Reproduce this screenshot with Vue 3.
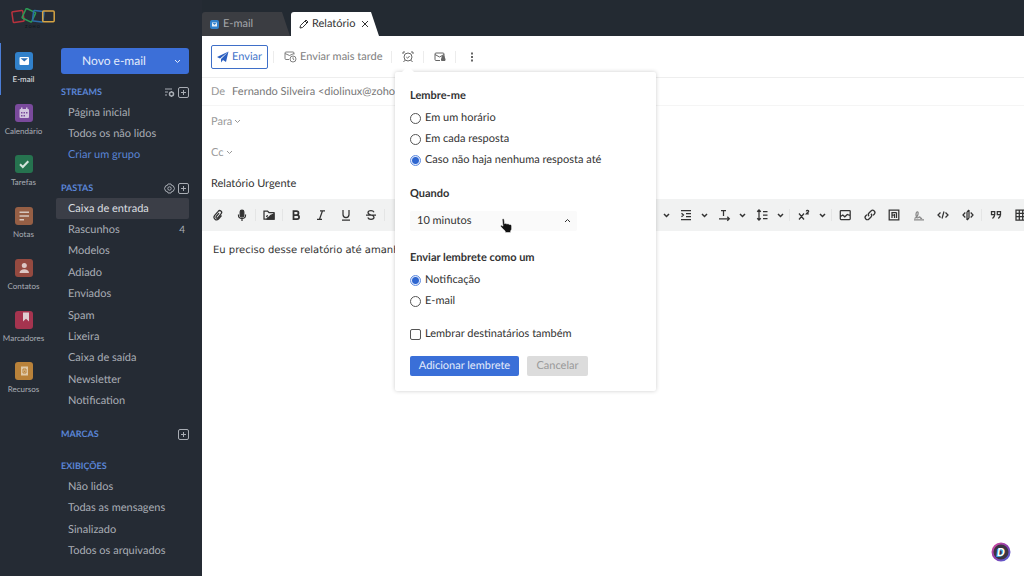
<script setup>
import { ref } from 'vue'

const apps = [
  { name: 'E-mail', color: '#3181cb', active: true, kind: 'mail' },
  { name: 'Calendário', color: '#7a4a9c', kind: 'calendar' },
  { name: 'Tarefas', color: '#26734f', kind: 'check' },
  { name: 'Notas', color: '#965f45', kind: 'note' },
  { name: 'Contatos', color: '#954a40', kind: 'person' },
  { name: 'Marcadores', color: '#a5344f', kind: 'bookmark' },
  { name: 'Recursos', color: '#b9823a', kind: 'resource' }
]

const sections = [
  { title: 'STREAMS', size: 'three', tool: 'sort', add: true, items: ['Página inicial', 'Todos os não lidos', 'Criar um grupo'] },
  {
    title: 'PASTAS', size: 'ten', tool: 'gear', add: true,
    items: ['Caixa de entrada', 'Rascunhos', 'Modelos', 'Adiado', 'Enviados', 'Spam', 'Lixeira', 'Caixa de saída', 'Newsletter', 'Notification']
  },
  { title: 'MARCAS', size: 'none', add: true, items: [] },
  { title: 'EXIBIÇÕES', size: 'four', items: ['Não lidos', 'Todas as mensagens', 'Sinalizado', 'Todos os arquivados'] }
]

const leftTools = [
  { name: 'Anexar', d: ['M10.500 6.500 7.500 10a2.600 2.600 0 0 1-4-3.300L7.200 2.300a1.900 1.900 0 0 1 3 2.400L6.800 8.800a1 1 0 0 1-1.600-1.300L8 4.200'] },
  { name: 'Ditar', d: ['M2.500 5.500v.8a3.500 3.200 0 0 0 7 0v-.8M6 9.500V12'], f: 'M6 1a1.800 1.800 0 0 1 1.800 1.800v3.400a1.800 1.800 0 0 1-3.600 0V2.800A1.800 1.800 0 0 1 6 1z' },
  { sep: true },
  { name: 'Nuvem', d: ['M1 2h3.500L6 3.500h5V10H1zM3.500 8a1.500 1.500 0 0 1 1.500-1.500'], f: 'M4 10c0-2 3-1.500 3.500-3.500L11 5v5z' },
  { sep: true },
  { name: 'Negrito', d: ['M3.500 2h3a2 2 0 0 1 0 4h-3zM3.500 6h3.500a2.100 2.100 0 0 1 0 4.200H3.500z'], bold: true },
  { name: 'Itálico', d: ['M5 1.800h5M2 10.300h5M7.500 1.800l-3 8.500'] },
  { name: 'Sublinhado', d: ['M3 1v4.500a3 3 0 0 0 6 0V1M2 11h8'] },
  { name: 'Tachado', d: ['M9 3.300C8.500 2.200 7.400 1.700 6 1.700c-1.700 0-3 .8-3 2.100C3 6.500 9 5.500 9 8.200c0 1.300-1.300 2.100-3 2.100s-2.800-.7-3.200-1.800M1 6h10'] },
  { sep: true }
]

const spacingTools = [
  { chevron: true, name: 'Alinhamento' },
  { name: 'Recuo', d: ['M1 1.500h10M6 4.500h5M6 7.500h5M1 10.500h10M1.500 4.200 3.500 6l-2 1.800'] },
  { chevron: true, name: 'Opções de recuo' },
  { name: 'Direção do texto', d: ['M3 1.500h5M5.500 1.500v5.500M1 9.800h10M9.300 7.800l2 2-2 2'] },
  { chevron: true, name: 'Opções de direção' },
  { name: 'Espaçamento', d: ['M3 1v10M1.200 2.800 3 1l1.800 1.800M1.200 9.200 3 11l1.800-1.800M7 2.500h4.500M7 6h4.500M7 9.500h4.500'] },
  { chevron: true, name: 'Opções de espaçamento' },
  { sep: true },
  { name: 'Sobrescrito', d: ['M1 4.500l5 6M6 4.500l-5 6M8.300 2.300c.3-1.400 2.600-1.200 2.300.2-.2.900-1.500 1.300-2.300 2.300h2.500'] },
  { chevron: true, name: 'Opções de sobrescrito' },
  { sep: true }
]

const insertTools = [
  { name: 'Imagem', d: ['M2 1.500h8.500a.7.700 0 0 1 .7.700v7.600a.7.700 0 0 1-.7.700H2a.7.700 0 0 1-.7-.7V2.200A.7.700 0 0 1 2 1.500zM1.500 7.500 3.800 6l2 1.800L8.300 5.500l2.700 1'] },
  { name: 'Link', d: ['M5 7.200a2.300 2.300 0 0 1 0-3.200l2-2a2.200 2.200 0 0 1 3.200 3.200L9 6.400M7 4.800a2.300 2.300 0 0 1 0 3.200l-2 2a2.200 2.200 0 0 1-3.200-3.200L3 5.600'] },
  { name: 'Campo', d: ['M1.200 1.200h9.600v9.600H1.200zM4 9V3.500h4.500M3.800 6h2M6.500 5v4M8.500 3.500V9'] },
  { name: 'Assinatura', faint: true, d: ['M1.500 9.500c2.500-1 4-4 3.600-6C4.700 2 3 3 3 5.500 3 8 4 9.500 5.500 8.500c1-.7 1.300-1 1.700 0 .3.900 1 1 1.800.4M1 10.800h10'] },
  { name: 'HTML', d: ['M3.500 3.500 1 6l2.500 2.500M8.500 3.500 11 6 8.500 8.500M7 2.500l-2 7'] },
  { name: 'Código', d: ['M3.300 3.500 1 6l2.300 2.500M8.700 3.500 11 6 8.700 8.500M7 1v8M5 3v8M5 3l2-2M5 11l2-2'] }
]

const endTools = [
  { sep: true },
  { name: 'Citação', d: ['M1.500 2.500h3.200v3.200H1.500zM4.700 5.200c0 2-.9 3.400-2.200 4.300M7.300 2.500h3.200v3.200H7.300zM10.500 5.200c0 2-.9 3.400-2.200 4.300'] },
  { name: 'Tabela', d: ['M1 1h10v10H1zM1 4.300h10M1 7.700h10M4.300 1v10M7.700 1v10'] }
]

const reminder = ref('noreply')
const sendAs = ref('notification')
const notifyAll = ref(false)
const delay = ref('10')
const subject = ref('Relatório Urgente')
</script>

<template>
  <div class="shell">
    <aside class="side">
      <div class="logo">
        <svg width="46" height="20" viewBox="0 0 46 20" role="img" aria-label="Zoho">
          <g fill="none" stroke-width="1.500">
            <rect x="1.500" y="3" width="11" height="11" rx="1" stroke="#b8323d" transform="rotate(-8 7 8.500)" />
            <rect x="12.500" y="2" width="10.500" height="10.500" rx="1" stroke="#2c9a55" transform="rotate(25 17.700 7.500)" />
            <rect x="22" y="3" width="10.500" height="10.500" rx="1" stroke="#2c6ca8" transform="rotate(7 27 8.500)" />
            <rect x="31.700" y="3" width="11.500" height="10.700" rx="1" stroke="#d6a444" />
          </g>
          <text x="14" y="19.500" class="wordmark">Z O H O</text>
        </svg>
      </div>
      <nav class="rail" aria-label="Aplicativos">
        <a v-for="a in apps" :key="a.name" href="#" class="app" :class="{ active: a.active }">
          <svg width="18" height="18" viewBox="0 0 18 18" aria-hidden="true">
            <rect width="18" height="18" rx="3" :fill="a.color" />
            <template v-if="a.kind === 'mail'">
              <rect x="4.500" y="5" width="9.500" height="8" rx="1" fill="#fff" />
              <path d="M5.500 6.300h7.500L9.300 9.400z" fill="#2d6fb4" />
            </template>
            <g v-else-if="a.kind === 'calendar'" fill="#d3c5de">
              <rect x="4.500" y="5" width="9.500" height="9" rx="1" />
              <path d="M6 3.500h1.500V6H6zM11 3.500h1.500V6H11z" />
              <path d="M6 8h1.500v1.500H6zM8.500 8H10v1.500H8.500zM11 8h1.500v1.500H11zM6 11h1.500v1.500H6zM8.500 11H10v1.500H8.500z" fill="#7a4a9c" />
            </g>
            <path v-else-if="a.kind === 'check'" d="M5 9.300 7.800 12 13.300 6.300" fill="none" stroke="#d4e4dc" stroke-width="2" />
            <path v-else-if="a.kind === 'note'" d="M4.500 5.300h9.500M4.500 9h9.500M4.500 12.700H9" stroke="#d6c6bd" stroke-width="1.500" />
            <g v-else-if="a.kind === 'person'" fill="#ddc8c5">
              <circle cx="9.300" cy="6.500" r="2.500" />
              <path d="M4.500 14c0-5 9.500-5 9.500 0z" />
            </g>
            <path v-else-if="a.kind === 'bookmark'" d="M8 1.500h6v9l-3-2.700-3 2.700z" fill="#decdd2" />
            <g v-else>
              <rect x="6" y="4.500" width="7" height="9" fill="#dfc9a8" />
              <path d="M8 7h3v4H8z" fill="none" stroke="#b9823a" />
              <path d="M9 8.500h1V10H9z" fill="#b9823a" />
            </g>
          </svg>
          <span>{{ a.name }}</span>
        </a>
      </nav>
      <div class="folders">
        <div class="new">
          <button type="button" class="new-main">Novo e-mail</button>
          <button type="button" class="new-more" aria-label="Mais opções">
            <svg width="7" height="5" viewBox="0 0 7 5"><path d="M1 1l2.500 2.500L6 1" /></svg>
          </button>
        </div>
        <section v-for="s in sections" :key="s.title">
          <header>
            <h2>{{ s.title }}</h2>
            <button v-if="s.tool" type="button" :aria-label="'Ajustar ' + s.title">
              <svg v-if="s.tool === 'sort'" width="11" height="11" viewBox="0 0 11 11"><path d="M1 2h7M1 5h3M1 8h2" /><circle cx="7.500" cy="7" r="2" stroke-width="1.500" /><path d="M7.500 4v1M7.500 9v1" /></svg>
              <svg v-else width="11" height="11" viewBox="0 0 11 11"><path d="M3.500 1.500 4 1h3l.7 1.500 1.600.3L10.500 5.500 9.300 8.200l-1.600.3L7 10H4l-.7-1.500-1.600-.3L.5 5.500l1.200-2.700 1.600-.3z" /><circle cx="5.500" cy="5.500" r="1.700" /></svg>
            </button>
            <button v-if="s.add" type="button" :aria-label="'Adicionar a ' + s.title">
              <svg width="11" height="11" viewBox="0 0 11 11"><rect x=".5" y=".5" width="10" height="10" rx="1.500" /><path d="M3 5.500h5M5.500 3v5" /></svg>
            </button>
          </header>
          <ul v-if="s.items.length" :class="s.size">
            <li v-for="i in s.items" :key="i">
              <a href="#" :class="{ selected: i === 'Caixa de entrada', create: i === 'Criar um grupo' }">
                <span>{{ i }}</span><span v-if="i === 'Rascunhos'" class="count">4</span>
              </a>
            </li>
          </ul>
        </section>
      </div>
    </aside>

    <main>
      <div class="tabs">
        <button type="button" class="tab">
          <svg class="tab-mail" width="9" height="9" viewBox="0 0 9 9"><rect width="9" height="9" rx="2" fill="#3181cb" /><rect x="2" y="2.500" width="5" height="4" fill="#e6eef6" /><path d="M2.500 3h4L4.500 5z" fill="#3181cb" /></svg>
          E-mail
        </button>
        <div class="tab current">
          <svg class="pencil" width="10" height="10" viewBox="0 0 10 10"><path d="M1 9l.5-2.500L7 1l2 2-5.500 5.500zM6 2l2 2" /></svg>
          <span class="tab-title">Relatório Urgente</span>
          <button type="button" class="close" aria-label="Fechar">
            <svg width="8" height="8" viewBox="0 0 8 8"><path d="M1 1l6 6M7 1 1 7" /></svg>
          </button>
        </div>
      </div>

      <div class="actions">
        <button type="button" class="send">
          <svg width="12" height="12" viewBox="0 0 12 12"><path d="M11.500.5 0 6l3 1.500zM11.500.5 4 8v3.500L6 9l3 2z" /></svg>
          Enviar
        </button>
        <i class="rule"></i>
        <button type="button" class="later">
          <svg width="13" height="12" viewBox="0 0 13 12"><path d="M5 8.500H2a1 1 0 0 1-1-1V2a1 1 0 0 1 1-1h7a1 1 0 0 1 1 1v1.500M1 2.500l4.500 2L10 2.500" /><circle cx="9" cy="8" r="3" /><path d="M9 6.300V8l1.200.8" /></svg>
          Enviar mais tarde
        </button>
        <i class="rule"></i>
        <div class="reminder">
          <button type="button" class="tool" aria-label="Lembrete" aria-expanded="true">
            <svg width="12" height="12" viewBox="0 0 12 12"><circle cx="6" cy="6" r="4" /><path d="M4.300 6l1.300 1.200 2-2.200M1 3V1h2M9 1h2v2M3 9.200 1.500 11M9 9.200l1.500 1.800" /></svg>
          </button>
          <form class="popup" @submit.prevent>
            <fieldset>
              <legend>Lembre-me</legend>
              <label><input v-model="reminder" type="radio" name="when" value="time"> Em um horário</label>
              <label><input v-model="reminder" type="radio" name="when" value="reply"> Em cada resposta</label>
              <label><input v-model="reminder" type="radio" name="when" value="noreply"> Caso não haja nenhuma resposta até</label>
            </fieldset>
            <div class="delay">
              <label class="title" for="delay">Quando</label>
              <div class="pick">
                <select id="delay" v-model="delay"><option value="10">10 minutos</option></select>
                <svg class="up" width="7" height="5" viewBox="0 0 7 5"><path d="M1 4l2.500-2.500L6 4" /></svg>
                <svg class="hand" width="13" height="16" viewBox="0 0 13 16"><path d="M2.200 1.500c.2-1 1.700-1 1.900 0l.5 4.200 1.300-.4.900.7 1.400-.3.900.8 1.500 0 1 1.200v3.500l-1 1.800v1.500H5.200V13L3 11 .8 8.600c-.5-1 .5-1.700 1.300-1.200l.9.800z" /></svg>
              </div>
            </div>
            <fieldset class="as">
              <legend>Enviar lembrete como um</legend>
              <label><input v-model="sendAs" type="radio" name="as" value="notification"> Notificação</label>
              <label><input v-model="sendAs" type="radio" name="as" value="mail"> E-mail</label>
            </fieldset>
            <label class="everyone"><input v-model="notifyAll" type="checkbox"> Lembrar destinatários também</label>
            <div class="buttons">
              <button type="submit" class="primary">Adicionar lembrete</button>
              <button type="button" class="cancel">Cancelar</button>
            </div>
          </form>
        </div>
        <i class="rule"></i>
        <button type="button" class="tool" aria-label="Proteger e-mail">
          <svg width="12" height="10" viewBox="0 0 12 10"><path d="M6 8.500H2a1 1 0 0 1-1-1V2a1 1 0 0 1 1-1h7a1 1 0 0 1 1 1v2M1 2.500l4.500 2.500L10 2.500" /><path class="solid" d="M7.500 6.500h3.500v2H7.500zM8 6V5a1.200 1.200 0 0 1 2.400 0v1" /></svg>
        </button>
        <i class="rule"></i>
        <button type="button" class="tool" aria-label="Mais">
          <svg width="4" height="12" viewBox="0 0 4 12"><path class="dots" d="M1 1.500h2v2H1zM1 5h2v2H1zM1 8.500h2v2H1z" /></svg>
        </button>
      </div>

      <div class="row from"><span>De</span><strong>Fernando Silveira &lt;diolinux@zohom</strong></div>
      <div class="row">
        <button type="button">Para <svg width="7" height="5" viewBox="0 0 7 5"><path d="M1 1l2.500 2.500L6 1" /></svg></button>
      </div>
      <div class="row">
        <button type="button">Cc <svg width="7" height="5" viewBox="0 0 7 5"><path d="M1 1l2.500 2.500L6 1" /></svg></button>
      </div>
      <div class="row subject"><input v-model="subject" type="text" aria-label="Assunto"></div>

      <div class="format">
        <div v-for="(group, g) in [leftTools, spacingTools, insertTools, endTools]" :key="g" class="group" :class="{ first: g === 0, insert: g === 2 }">
          <template v-for="(t, n) in group" :key="n">
            <i v-if="t.sep" class="rule"></i>
            <button v-else-if="t.chevron" type="button" class="more" :aria-label="t.name">
              <svg width="7" height="5" viewBox="0 0 7 5"><path d="M1 1l2.500 2.500L6 1" /></svg>
            </button>
            <button v-else type="button" class="icon" :class="{ faint: t.faint, bold: t.bold }" :aria-label="t.name">
              <svg width="12" height="12" viewBox="0 0 12 12"><path v-for="p in t.d" :key="p" :d="p" /><path v-if="t.f" class="fill" :d="t.f" /></svg>
            </button>
          </template>
        </div>
      </div>

      <div class="body" contenteditable="true" role="textbox" aria-label="Mensagem">Eu preciso desse relatório até amanh</div>

      <svg class="badge" width="20" height="20" viewBox="0 0 20 20" role="img" aria-label="D">
        <defs>
          <linearGradient id="ring" x1="0" y1="0" x2="1" y2="1"><stop offset="0" stop-color="#d34a9d" /><stop offset=".5" stop-color="#8d3fae" /><stop offset="1" stop-color="#4b62d6" /></linearGradient>
        </defs>
        <circle cx="10" cy="10" r="8.500" fill="#3b3442" stroke="url(#ring)" stroke-width="2" />
        <text x="5" y="14.500" class="badge-shade">D</text>
        <text x="6" y="14" class="badge-letter">D</text>
      </svg>
    </main>
  </div>
</template>

<style>
body { margin: 0; background: #252b34; }
</style>

<style scoped>
.shell {
  display: grid;
  grid-template-columns: 202px minmax(0, 1fr);
  height: 100vh;
  overflow: hidden;
  font: 11px/16px Lato, "Liberation Sans", sans-serif;
  text-rendering: geometricPrecision;
  background: #252b34;
  color: #a9adb4;
}
button, input, select { font: inherit; color: inherit; margin: 0; text-rendering: inherit; }
button { padding: 0; border: 0; background: none; display: inline-flex; align-items: center; justify-content: center; white-space: nowrap; }
a { color: inherit; text-decoration: none; }
svg { display: block; flex: none; }
button svg, .up { fill: none; stroke: currentColor; stroke-width: 1; }
h2 { margin: 0; }

.side { display: grid; grid-template-columns: 48px minmax(0, 1fr); grid-template-rows: 43px 1fr; }
.logo { grid-column: 1 / -1; padding: 8px 0 0 11px; }
.wordmark { font-size: 4px; fill: #11161c; font-weight: 700; }

.rail { display: grid; grid-auto-rows: 1fr; min-height: 362px; align-self: start; }
.app {
  display: flex; flex-direction: column; align-items: center; gap: 3px;
  padding: 9px 2px 0 0; font-size: 8px; line-height: 12px; border-left: 1px solid transparent;
}
.app.active { border-left-color: #4b7dd6; color: #e6e8eb; }

.folders { padding: 5px 13px 0 13px; display: flex; flex-direction: column; gap: 12px; }
.new { display: flex; height: 26px; background: #3c6fd8; border-radius: 3px; color: #e3ebfb; margin-bottom: -4px; }
.new-main { flex: 1; font-size: 12px; padding-left: 2px; }
.new-more { width: 24px; }
header { display: flex; align-items: center; gap: 3px; height: 20px; }
h2 { flex: 1; font-size: 9px; line-height: 12px; font-weight: 700; color: #5a85d6; }
ul { list-style: none; margin: 0 0 0 -5px; padding: 0; display: grid; grid-auto-rows: 1fr; }
.three { min-height: 64px; }
.ten { min-height: 214px; }
.four { min-height: 86px; }
li a { display: flex; align-items: center; justify-content: space-between; height: 100%; padding: 0 4px 0 12px; border-radius: 2px; }
.selected { background: #3b3e47; color: #dcdee1; }
.create { color: #5a85d6; }
.count { font-size: 10px; }

main { position: relative; display: flex; flex-direction: column; background: #fff; color: #333; min-width: 0; }
.tabs { display: flex; gap: 1px; height: 24px; padding-top: 12px; background: #232a32; }
.tab {
  display: flex; align-items: center; justify-content: flex-start; gap: 4px; width: 88px; box-sizing: border-box; padding-left: 8px;
  background: #3b3d42; color: #a5a7ab; clip-path: polygon(0 0, 80px 0, 100% 100%, 0 100%); border-radius: 3px 0 0 0;
}
.tab .tab-mail { stroke: none; }
.current { background: #fff; color: #333; gap: 3px; }
.tab-title { width: 46px; overflow: hidden; white-space: nowrap; }
.pencil { fill: none; stroke: #333; }

.actions { display: flex; align-items: center; height: 41px; padding-left: 9px; border-bottom: 1px solid #eee; color: #808080; }
.actions .rule { width: 1px; height: 12px; background: #ececec; }
.send { height: 24px; width: 57px; box-sizing: border-box; gap: 3px; border: 1px solid #3f6fc8; border-radius: 2px; color: #4274c9; margin-right: 5px; }
.send svg { fill: #2b5fc0; stroke: none; }
.later { gap: 3px; width: 97px; margin: 0 10px; justify-content: flex-start; }
.reminder { position: relative; }
.tool { width: 31px; height: 24px; color: #666; }
.solid { fill: currentColor; }
.dots { fill: currentColor; stroke: none; }

.popup {
  position: absolute; z-index: 2; top: 27px; left: 3px; width: 261px; box-sizing: border-box;
  padding: 12px 16px 15px 15px; background: #fff; color: #333; border-radius: 2px; box-shadow: 0 0 4px rgba(0, 0, 0, .2);
}
.popup::before {
  content: ""; position: absolute; left: 7px; top: -6px; border: 6px solid transparent; border-top: 0; border-bottom-color: #fff;
}
fieldset { border: 0; margin: 0; padding: 0; min-width: 0; }
legend, .title { display: block; padding: 0; height: 24px; line-height: 24px; font-weight: 700; }
fieldset label, .everyone { display: flex; align-items: center; gap: 4px; height: 21px; }
.popup input { appearance: none; width: 11px; height: 11px; box-sizing: border-box; border: 1px solid #555; background: #fff; }
.popup input[type="radio"] { border-radius: 50%; }
.popup input[type="radio"]:checked { border-color: #5f8be0; background: radial-gradient(circle, #2e66d0 0 3px, #dfe9fb 4px); }
.popup input[type="checkbox"] { border-radius: 2px; }
.delay { margin-top: 11px; }
.pick { position: relative; width: 167px; margin-top: 5px; }
select { display: block; appearance: none; width: 100%; height: 20px; padding: 0 7px; border: 0; border-radius: 2px; background: #fafafa; }
.up { position: absolute; right: 6px; top: 7px; }
.hand { position: absolute; left: 90px; top: 7px; fill: #111; stroke: #fff; stroke-width: .5; }
.as { margin-top: 15px; }
.everyone { margin-top: 12px; }
.buttons { display: flex; gap: 8px; margin-top: 11px; }
.buttons button { height: 20px; border-radius: 2px; }
.primary { width: 109px; background: #3a6fd8; color: #e4ecfb; }
.cancel { width: 61px; background: #dcdcdc; color: #999; }

.row { display: flex; align-items: center; padding: 0 9px; height: 31px; color: #999; white-space: nowrap; }
.row button { gap: 2px; }
.from { height: 27px; gap: 7px; border-bottom: 1px solid #f5f5f5; }
.from strong { font-weight: 400; color: #777; }
.subject input { flex: 1; padding: 0; border: 0; outline: 0; color: #333; background: none; }

.format { display: flex; height: 32px; background: #f1f2f2; overflow: hidden; color: #333; }
.group { display: flex; flex: none; align-items: center; gap: 1px; }
.first { width: 459px; box-sizing: border-box; padding-left: 3px; }
.insert { width: 147px; gap: 0; }
.insert .icon { flex: 1; }
.icon { width: 24px; height: 24px; }
.icon svg { stroke-width: 1.250; }
.more { width: 10px; height: 24px; margin-right: 2px; }
.more svg { stroke-width: 1.500; }
.bold svg { stroke-width: 1.750; }
.faint { color: #888; }
.format svg { overflow: visible; }
.fill { fill: currentColor; }
.group .rule { width: 1px; height: 12px; margin: 0 1px; background: #e4e5e5; }
.first .rule { margin: 0; }

.body { flex: 1; padding: 12px 11px; outline: 0; font: 10px/16px "DejaVu Sans", sans-serif; color: #333; }
.badge { position: absolute; right: 13px; bottom: 14px; }
.badge-letter, .badge-shade { font: italic 900 11px Lato, sans-serif; fill: #fff; }
.badge-shade { fill: #41a6dd; }
</style>
